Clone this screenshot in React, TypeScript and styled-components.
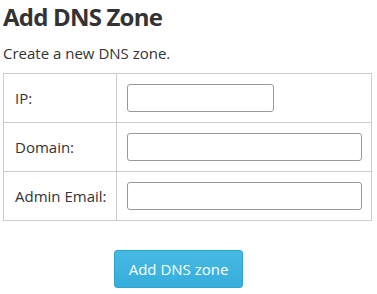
import React from "react";
import styled, { createGlobalStyle } from "styled-components";

const Global = createGlobalStyle`
  html, body { margin: 0; padding: 0; background: #ffffff; }
  body { font-family: "Open Sans", "DejaVu Sans", sans-serif; color: #333; }
`;

const Page = styled.div`
  padding: 0 6px 0 3px;
  display: flex;
  flex-direction: column;
`;

const Title = styled.h1`
  margin: 2px 0 0;
  font-size: 24px;
  font-weight: 700;
  letter-spacing: -0.8px;
  line-height: 30px;
  color: #333;
`;

const Subtitle = styled.p`
  margin: 11px 0 0;
  font-size: 15px;
  line-height: 20px;
  color: #333;
`;

const Table = styled.table`
  margin-top: 10px;
  border-collapse: collapse;
  table-layout: fixed;
  width: 369px;
`;

const LabelCol = styled.col`
  width: 113px;
`;

const Row = styled.tr`
  height: 49px;
`;

const LabelCell = styled.td`
  border: 1px solid #ccc;
  padding: 0 0 0 11px;
  font-size: 15px;
  color: #333;
  vertical-align: middle;
  white-space: nowrap;
`;

const InputCell = styled.td`
  border: 1px solid #ccc;
  padding: 0 9px 0 10px;
  vertical-align: middle;
`;

const Input = styled.input<{ $w?: number }>`
  display: block;
  box-sizing: border-box;
  width: ${(p) => (p.$w ? `${p.$w}px` : "100%")};
  height: 28px;
  border: 1px solid #999;
  border-radius: 3px;
  background: #fff;
  font-family: inherit;
  font-size: 14px;
`;

const Actions = styled.div`
  display: flex;
  padding: 29px 0 0 111px;
`;

const Button = styled.button`
  width: 129px;
  height: 38px;
  border: 1px solid #2ea4cf;
  border-radius: 3px;
  background: linear-gradient(#45b9e3, #36aedb);
  color: #fff;
  font-family: "Open Sans", sans-serif;
  font-size: 15px;
  padding: 0;
`;

export default function App() {
  return (
    <>
      <Global />
      <Page>
        <Title>Add DNS Zone</Title>
        <Subtitle>Create a new DNS zone.</Subtitle>
        <Table>
          <colgroup>
            <LabelCol />
            <col />
          </colgroup>
          <tbody>
            <Row>
              <LabelCell>IP:</LabelCell>
              <InputCell><Input $w={147} /></InputCell>
            </Row>
            <Row>
              <LabelCell>Domain:</LabelCell>
              <InputCell><Input /></InputCell>
            </Row>
            <Row>
              <LabelCell>Admin Email:</LabelCell>
              <InputCell><Input /></InputCell>
            </Row>
          </tbody>
        </Table>
        <Actions>
          <Button>Add DNS zone</Button>
        </Actions>
      </Page>
    </>
  );
}
